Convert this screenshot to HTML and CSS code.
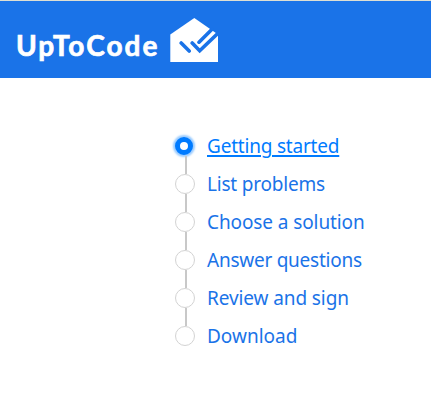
FILE: index.html
```html
<!DOCTYPE html>
<html lang="en">
<head>
<meta charset="utf-8">
<title>UpToCode</title>
<link rel="stylesheet" href="styles.css">
</head>
<body>
<header class="header">
  <span class="wordmark">UpToCode</span>
  <svg class="logo" width="50" height="46" viewBox="169 17 50 46" aria-hidden="true">
    <path d="M170.3 34.5 194.3 18 218 34.5V62H170.3Z" fill="#fff"/>
    <path d="m181.2 43 8 8M192.2 43l7.5 7.8L219 32.2M199 42.2l13-13" fill="none" stroke="#1a73e8" stroke-width="3.6" stroke-linecap="round"/>
  </svg>
</header>
<nav>
  <ol class="steps">
    <li class="step active"><span class="dot"></span><a class="label s1">Getting started</a></li>
    <li class="step"><span class="dot"></span><a class="label s2">List problems</a></li>
    <li class="step"><span class="dot"></span><a class="label s3">Choose a solution</a></li>
    <li class="step"><span class="dot"></span><a class="label s4">Answer questions</a></li>
    <li class="step"><span class="dot"></span><a class="label s5">Review and sign</a></li>
    <li class="step"><span class="dot"></span><a class="label s6">Download</a></li>
  </ol>
</nav>
</body>
</html>
```
FILE: styles.css
```css
* { box-sizing: border-box; }
body { margin: 0; background: #fff; overflow: hidden; font-family: "Noto Sans", sans-serif; }
.header {
  display: flex;
  height: 78px;
  border-top: 1px solid #dedfd3;
  background: #1a73e8;
  padding: 16px 0 0 16px;
}
.wordmark {
  width: 153px;
  color: #fff;
  font: 700 28px/56px Lato, sans-serif;
  letter-spacing: 2px;
  -webkit-text-stroke: 0.7px #fff;
  white-space: nowrap;
}
.logo { flex: none; }
.steps { list-style: none; margin: 0; padding: 49px 0 0 175px; }
.step { position: relative; display: flex; align-items: center; height: 38px; }
.step:not(:last-child)::after {
  content: "";
  position: absolute;
  left: 10px;
  top: 29px;
  width: 2px;
  height: 18px;
  background: #c8c8c8;
}
.dot {
  width: 20px;
  height: 20px;
  flex: none;
  margin-right: 12px;
  border: 1px solid #d3d3d3;
  border-radius: 50%;
  background: #fff;
}
.active .dot {
  width: 18px;
  height: 18px;
  margin: 0 14px 0 0;
  border: 5px solid #007bff;
  box-shadow: 0 0 2px 2px #9bccff;
}
.label { color: #1a73e8; font-size: 19px; line-height: 30px; white-space: nowrap; }
.s1, .s2 { letter-spacing: -0.2px; }
.s3, .s5 { letter-spacing: -0.1px; }
.s4 { letter-spacing: -0.25px; }
.active .label { color: #007bff; text-decoration: underline; text-decoration-thickness: 2px; text-underline-offset: 2px; text-decoration-skip-ink: auto; }
```
